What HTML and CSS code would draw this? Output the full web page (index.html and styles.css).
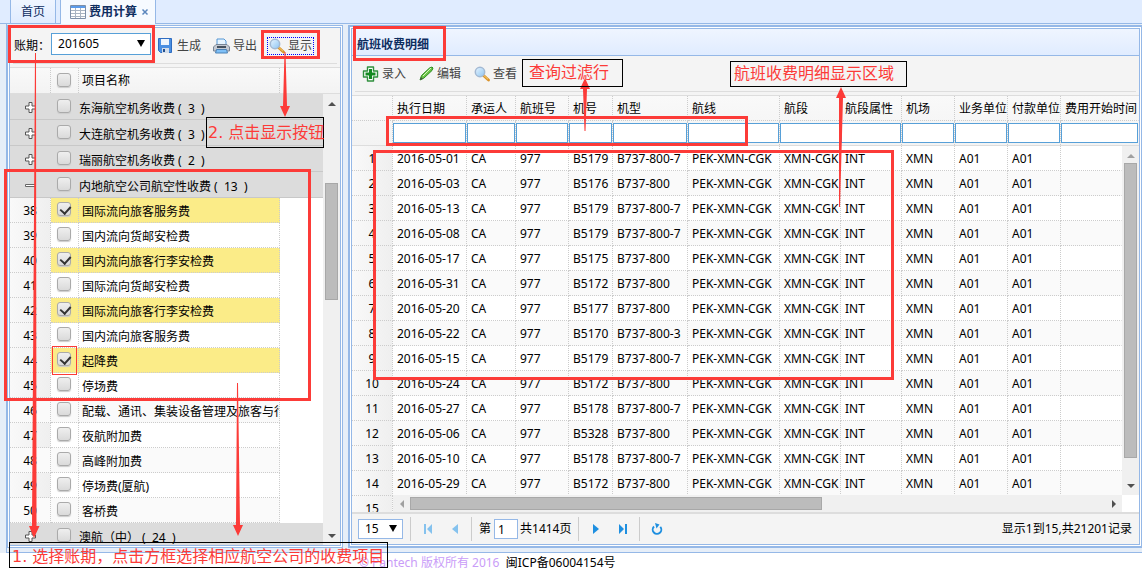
FILE: index.html
```html
<!DOCTYPE html>
<html lang="zh-CN">
<head>
<meta charset="utf-8">
<title>费用计算</title>
<link rel="stylesheet" href="styles.css">
</head>
<body>
<svg class="defs" aria-hidden="true">
  <defs>
    <linearGradient id="lens" x1="0" y1="0" x2="1" y2="1"><stop offset="0" stop-color="#e8f5ff"/><stop offset="1" stop-color="#8cc4f2"/></linearGradient>
    <symbol id="i-find" viewBox="0 0 16 16"><path d="M9.500 9.500l5 4.500" stroke="#d9932c" stroke-width="2.800" stroke-linecap="round"/><path d="M9.500 9.200l4.500 4" stroke="#f6cf6c" stroke-width="1"/><circle cx="6" cy="6" r="4.700" fill="url(#lens)" stroke="#a3b9d3" stroke-width="1.500"/></symbol>
    <symbol id="i-plus" viewBox="0 0 11 11"><path d="M4 .5h3V4h3.500v3H7v3.500H4V7H.5V4H4z" fill="#fff" stroke="#555"/></symbol>
    <symbol id="i-minus" viewBox="0 0 11 11"><path d="M.5 4.500h10v2H.5z" fill="#fff" stroke="#666"/></symbol>
  </defs>
</svg>
<nav class="tabs">
  <button class="tab" type="button">首页</button>
  <button class="tab active" type="button">
    <svg width="16" height="14" viewBox="0 0 16 14"><path d="M.5.5h15v13H.5z" fill="#fff" stroke="#7d8fa8"/><path d="M1 1h14v2H1z" fill="#5b9bea"/><path d="M1 5.500h14M1 8.500h14M1 11.500h14M5.500 3v10M10.500 3v10" stroke="#a9b4c2"/></svg>
    <span>费用计算</span><svg class="close" width="8" height="8" viewBox="0 0 8 8"><path d="M1.500 1.500l5 5M6.500 1.500l-5 5" stroke="#5a86bd" stroke-width="1.500"/></svg>
  </button>
</nav>
<main class="shell">
  <section class="panel side"><div class="inner">
    <div class="toolbar">
      <label for="period">账期：</label>
      <span class="pick period"><select id="period"><option>201605</option></select></span>
      <button type="button" class="tool save"><svg width="14" height="15" viewBox="0 0 14 15"><path d="M.5.5h13v14H2.500l-2-2z" fill="#4a8fe2" stroke="#2f6cc0"/><path d="M3 1h8v6H3z" fill="#eef5fd"/><path d="M4 10h7v5H4z" fill="#d3dde9"/><path d="M5 11h2v3H5z" fill="#244e8c"/></svg>生成</button>
      <button type="button" class="tool print"><svg width="17" height="16" viewBox="0 0 17 16"><path d="M4 7V1h7l2 2v4" fill="#e6f4ff" stroke="#5596d4"/><path d="M3 6.500h11l2.500 2.500v4H.5V9z" fill="#c4cad3" stroke="#788596"/><path d="M4 8h9v2H4z" fill="#46515f"/><path d="M3.500 11.500h10l1 3.500h-12z" fill="#7fc0f7" stroke="#4b81b5"/></svg>导出</button>
      <button type="button" class="tool show"><svg width="16" height="16"><use href="#i-find"/></svg>显示</button>
    </div>
    <table class="grid head tree"><colgroup><col class="w-num"><col class="w-box"><col class="w-name"><col></colgroup>
      <tr><th></th><th><input type="checkbox" id="all"></th><th><label for="all">项目名称</label></th><th class="fill"></th></tr>
    </table>
    <div class="view">
      <div class="rows">
        <table class="grid tree"><colgroup><col class="w-num"><col class="w-box"><col class="w-name"><col></colgroup>
          <tr class="group"><td><svg width="11" height="11"><use href="#i-plus"/></svg></td><td><input type="checkbox" id="g1"></td><td colspan="2"><label for="g1">东海航空机务收费&nbsp;(&nbsp;&nbsp;3&nbsp;&nbsp;)</label></td></tr>
          <tr class="group"><td><svg width="11" height="11"><use href="#i-plus"/></svg></td><td><input type="checkbox" id="g2"></td><td colspan="2"><label for="g2">大连航空机务收费&nbsp;(&nbsp;&nbsp;3&nbsp;&nbsp;)</label></td></tr>
          <tr class="group"><td><svg width="11" height="11"><use href="#i-plus"/></svg></td><td><input type="checkbox" id="g3"></td><td colspan="2"><label for="g3">瑞丽航空机务收费&nbsp;(&nbsp;&nbsp;2&nbsp;&nbsp;)</label></td></tr>
          <tr class="group"><td><svg width="11" height="11"><use href="#i-minus"/></svg></td><td><input type="checkbox" id="g4"></td><td colspan="2"><label for="g4">内地航空公司航空性收费&nbsp;(&nbsp;&nbsp;13&nbsp;&nbsp;)</label></td></tr>
          <tr class="on"><td>38</td><td><input type="checkbox" id="r38" checked></td><td><label for="r38">国际流向旅客服务费</label></td><td class="fill"></td></tr>
          <tr><td>39</td><td><input type="checkbox" id="r39"></td><td><label for="r39">国内流向货邮安检费</label></td><td class="fill"></td></tr>
          <tr class="on"><td>40</td><td><input type="checkbox" id="r40" checked></td><td><label for="r40">国内流向旅客行李安检费</label></td><td class="fill"></td></tr>
          <tr><td>41</td><td><input type="checkbox" id="r41"></td><td><label for="r41">国际流向货邮安检费</label></td><td class="fill"></td></tr>
          <tr class="on"><td>42</td><td><input type="checkbox" id="r42" checked></td><td><label for="r42">国际流向旅客行李安检费</label></td><td class="fill"></td></tr>
          <tr><td>43</td><td><input type="checkbox" id="r43"></td><td><label for="r43">国内流向旅客服务费</label></td><td class="fill"></td></tr>
          <tr class="on"><td>44</td><td><input type="checkbox" id="r44" checked></td><td><label for="r44">起降费</label></td><td class="fill"></td></tr>
          <tr><td>45</td><td><input type="checkbox" id="r45"></td><td><label for="r45">停场费</label></td><td class="fill"></td></tr>
          <tr class="alt"><td>46</td><td><input type="checkbox" id="r46"></td><td><label for="r46">配载、通讯、集装设备管理及旅客与行</label></td><td class="fill"></td></tr>
          <tr><td>47</td><td><input type="checkbox" id="r47"></td><td><label for="r47">夜航附加费</label></td><td class="fill"></td></tr>
          <tr class="alt"><td>48</td><td><input type="checkbox" id="r48"></td><td><label for="r48">高峰附加费</label></td><td class="fill"></td></tr>
          <tr><td>49</td><td><input type="checkbox" id="r49"></td><td><label for="r49">停场费(厦航)</label></td><td class="fill"></td></tr>
          <tr class="alt"><td>50</td><td><input type="checkbox" id="r50"></td><td><label for="r50">客桥费</label></td><td class="fill"></td></tr>
          <tr class="group"><td><svg width="11" height="11"><use href="#i-plus"/></svg></td><td><input type="checkbox" id="g5"></td><td colspan="2"><label for="g5">澳航（中）&nbsp;(&nbsp;&nbsp;24&nbsp;&nbsp;)</label></td></tr>
        </table>
      </div>
      <div class="bar vert tree-bar" aria-hidden="true"><i class="up"></i><b></b><s></s><u></u><i class="down"></i></div>
    </div>
  </div></section>

  <section class="panel detail"><div class="inner">
    <h2>航班收费明细</h2>
    <div class="toolbar">
      <button type="button" class="tool"><svg width="17" height="16" viewBox="0 0 17 16"><path d="M5.500 1h6v4h4v6h-4v4h-6v-4h-4V5h4z" fill="#fff" stroke="#2f8f3d" stroke-width="1.400" stroke-linejoin="round"/><path d="M7 3h3v3.500h3.500v3H10V13H7V9.500H3.500v-3H7z" fill="#138a21"/></svg>录入</button>
      <button type="button" class="tool"><svg width="15" height="15" viewBox="0 0 15 15"><path d="M1 14l1.500-4.500L10.500 2l2.500-1 1 1-1 2.500L5 12z" fill="#6bc447" stroke="#2e8d22"/><path d="M4 10l8-8" stroke="#d5f5bd"/><path d="M1 14l1-3 2 2z" fill="#465443"/></svg>编辑</button>
      <button type="button" class="tool"><svg width="16" height="16"><use href="#i-find"/></svg>查看</button>
    </div>
    <table class="grid head flights"><colgroup><col class="c0"><col class="c1"><col class="c2"><col class="c3"><col class="c4"><col class="c5"><col class="c6"><col class="c7"><col class="c8"><col class="c9"><col class="c9"><col class="c9"><col></colgroup>
      <tr><th></th><th>执行日期</th><th>承运人</th><th>航班号</th><th>机号</th><th>机型</th><th>航线</th><th>航段</th><th>航段属性</th><th>机场</th><th>业务单位</th><th>付款单位</th><th>费用开始时间</th></tr>
      <tr class="filter"><td></td><td><input aria-label="执行日期"></td><td><input aria-label="承运人"></td><td><input aria-label="航班号"></td><td><input aria-label="机号"></td><td><input aria-label="机型"></td><td><input aria-label="航线"></td><td><input aria-label="航段"></td><td><input aria-label="航段属性"></td><td><input aria-label="机场"></td><td><input aria-label="业务单位"></td><td><input aria-label="付款单位"></td><td><input aria-label="费用开始时间"></td></tr>
    </table>
    <div class="view">
      <div class="frozen"><table class="grid nums">
        <tr><td>1</td></tr><tr><td>2</td></tr><tr><td>3</td></tr><tr><td>4</td></tr><tr><td>5</td></tr><tr><td>6</td></tr><tr><td>7</td></tr><tr><td>8</td></tr><tr><td>9</td></tr><tr><td>10</td></tr><tr><td>11</td></tr><tr><td>12</td></tr><tr><td>13</td></tr><tr><td>14</td></tr><tr><td>15</td></tr>
      </table></div>
      <div class="scroll">
        <div class="rows"><table class="grid data"><colgroup><col class="c1"><col class="c2"><col class="c3"><col class="c4"><col class="c5"><col class="c6"><col class="c7"><col class="c8"><col class="c9"><col class="c9"><col class="c9"><col></colgroup>
          <tr><td>2016-05-01</td><td>CA</td><td>977</td><td>B5179</td><td>B737-800-7</td><td>PEK-XMN-CGK</td><td>XMN-CGK</td><td>INT</td><td>XMN</td><td>A01</td><td>A01</td><td></td></tr>
          <tr><td>2016-05-03</td><td>CA</td><td>977</td><td>B5176</td><td>B737-800</td><td>PEK-XMN-CGK</td><td>XMN-CGK</td><td>INT</td><td>XMN</td><td>A01</td><td>A01</td><td></td></tr>
          <tr><td>2016-05-13</td><td>CA</td><td>977</td><td>B5179</td><td>B737-800-7</td><td>PEK-XMN-CGK</td><td>XMN-CGK</td><td>INT</td><td>XMN</td><td>A01</td><td>A01</td><td></td></tr>
          <tr><td>2016-05-08</td><td>CA</td><td>977</td><td>B5179</td><td>B737-800-7</td><td>PEK-XMN-CGK</td><td>XMN-CGK</td><td>INT</td><td>XMN</td><td>A01</td><td>A01</td><td></td></tr>
          <tr><td>2016-05-17</td><td>CA</td><td>977</td><td>B5175</td><td>B737-800</td><td>PEK-XMN-CGK</td><td>XMN-CGK</td><td>INT</td><td>XMN</td><td>A01</td><td>A01</td><td></td></tr>
          <tr><td>2016-05-31</td><td>CA</td><td>977</td><td>B5172</td><td>B737-800</td><td>PEK-XMN-CGK</td><td>XMN-CGK</td><td>INT</td><td>XMN</td><td>A01</td><td>A01</td><td></td></tr>
          <tr><td>2016-05-20</td><td>CA</td><td>977</td><td>B5177</td><td>B737-800</td><td>PEK-XMN-CGK</td><td>XMN-CGK</td><td>INT</td><td>XMN</td><td>A01</td><td>A01</td><td></td></tr>
          <tr><td>2016-05-22</td><td>CA</td><td>977</td><td>B5170</td><td>B737-800-3</td><td>PEK-XMN-CGK</td><td>XMN-CGK</td><td>INT</td><td>XMN</td><td>A01</td><td>A01</td><td></td></tr>
          <tr><td>2016-05-15</td><td>CA</td><td>977</td><td>B5179</td><td>B737-800-7</td><td>PEK-XMN-CGK</td><td>XMN-CGK</td><td>INT</td><td>XMN</td><td>A01</td><td>A01</td><td></td></tr>
          <tr><td>2016-05-24</td><td>CA</td><td>977</td><td>B5172</td><td>B737-800</td><td>PEK-XMN-CGK</td><td>XMN-CGK</td><td>INT</td><td>XMN</td><td>A01</td><td>A01</td><td></td></tr>
          <tr><td>2016-05-27</td><td>CA</td><td>977</td><td>B5178</td><td>B737-800-7</td><td>PEK-XMN-CGK</td><td>XMN-CGK</td><td>INT</td><td>XMN</td><td>A01</td><td>A01</td><td></td></tr>
          <tr><td>2016-05-06</td><td>CA</td><td>977</td><td>B5328</td><td>B737-800</td><td>PEK-XMN-CGK</td><td>XMN-CGK</td><td>INT</td><td>XMN</td><td>A01</td><td>A01</td><td></td></tr>
          <tr><td>2016-05-10</td><td>CA</td><td>977</td><td>B5178</td><td>B737-800-7</td><td>PEK-XMN-CGK</td><td>XMN-CGK</td><td>INT</td><td>XMN</td><td>A01</td><td>A01</td><td></td></tr>
          <tr><td>2016-05-29</td><td>CA</td><td>977</td><td>B5172</td><td>B737-800</td><td>PEK-XMN-CGK</td><td>XMN-CGK</td><td>INT</td><td>XMN</td><td>A01</td><td>A01</td><td></td></tr>
        </table></div>
        <div class="bar horiz" aria-hidden="true"><i class="left"></i><s></s><u></u><i class="right"></i></div>
      </div>
      <div class="edge"><div class="bar vert data-bar" aria-hidden="true"><i class="up"></i><s></s><u></u><i class="down"></i></div></div>
    </div>
    <div class="pager">
      <span class="pick size"><select aria-label="每页条数"><option>15</option></select></span>
      <span class="sep"></span>
      <button type="button" class="dim" aria-label="首页"><svg width="10" height="12" viewBox="0 0 10 12"><path d="M1 1h2v10H1zM9 1v10L4 6z"/></svg></button>
      <button type="button" class="dim" aria-label="上一页"><svg width="10" height="12" viewBox="0 0 10 12"><path d="M8 1v10L2 6z"/></svg></button>
      <span class="sep"></span>
      <label for="page">第</label><input id="page" value="1"><span class="total">共1414页</span>
      <span class="sep"></span>
      <button type="button" aria-label="下一页"><svg width="10" height="12" viewBox="0 0 10 12"><path d="M2 1v10l6-5z"/></svg></button>
      <button type="button" aria-label="末页"><svg width="10" height="12" viewBox="0 0 10 12"><path d="M7 1h2v10H7zM1 1v10l5-5z"/></svg></button>
      <span class="sep"></span>
      <button type="button" aria-label="刷新"><svg width="12" height="13" viewBox="0 0 12 13"><path d="M3 3.500a4.300 4.300 0 1 0 6.300.3" fill="none" stroke="#1e8fe0" stroke-width="1.900"/><path d="M4 0l4.500 1.500L5.500 5.500z"/></svg></button>
      <span class="info">显示1到15,共21201记录</span>
    </div>
  </div></section>
</main>
<footer><span>© Pantech 版权所有 2016</span>&nbsp; 闽ICP备06004154号</footer>

<div class="notes">
  <div class="frame f-period"></div><div class="frame f-show"></div><div class="frame f-items"></div><div class="frame thin f-box"></div>
  <div class="frame f-title"></div><div class="frame f-filter"></div><div class="frame f-data"></div>
  <svg class="arrows" width="900" height="545" viewBox="0 0 900 545" aria-hidden="true">
    <path d="M35 53h1l.5 473h3L34 538l-5-12h3z"/>
    <path d="M284.500 52h1l1.500 54h3l-5 11-5-11h3z"/>
    <path d="M237 383h1l2 142h3l-5 11-5-11h3z"/>
    <path d="M584.500 131h1l1.500-42h3l-5-11-5 11h3z"/>
    <path d="M839 207h1l3-109h3l-5-11-5 11h3z"/>
  </svg>
  <p class="note n-show">2. 点击显示按钮</p>
  <p class="note n-filter">查询过滤行</p>
  <p class="note n-data">航班收费明细显示区域</p>
  <p class="note n-period">1. 选择账期，点击方框选择相应航空公司的收费项目</p>
</div>
</body>
</html>
```
FILE: styles.css
```css
* { box-sizing: border-box; }
body {
  margin: 0; height: 100vh; display: flex; flex-direction: column; position: relative; overflow: hidden;
  font: 12px/16px "Noto Sans", "Noto Sans CJK SC", sans-serif; color: #000; background: #fff;
}
button, input, select { font: inherit; color: inherit; margin: 0; padding: 0; border: 0; background: none; }
svg { flex: none; display: block; }
.defs { position: absolute; width: 0; height: 0; }

.tabs { display: flex; gap: 4px; height: 24px; flex: none; padding-left: 10px; background: #e0ecff; border-bottom: 1px solid #95b8e7; }
.tab { height: 23px; padding: 0 10px; border: solid #95b8e7; border-width: 0 1px; background: linear-gradient(#eff5ff, #e0ecff); color: #0e2d5f; }
.tab.active { display: flex; align-items: center; gap: 3px; height: 24px; padding: 0 6px 0 9px; background: #f6faff; font-weight: bold; }
.close { margin-left: 1px; }

.shell { flex: 1; min-height: 0; display: flex; gap: 5px; margin-left: 6px; padding: 1px 0 4px; border: solid #95b8e7; border-width: 0 0 1px 1px; background: #e6eef8; box-shadow: -6px 0 #e6eef8; }
.panel { display: flex; border: 2px solid #95b8e7; padding: 1px; background: #fff; min-width: 0; }
.side { flex: 0 0 336px; border-width: 1px; }
.detail { flex: 1; border-right-width: 1px; }
.inner { flex: 1; min-width: 0; display: flex; flex-direction: column; border: 1px solid #95b8e7; background: #f4f4f4; }
h2 { margin: 0; height: 27px; padding: 2px 5px 0; font-size: 12px; line-height: 28px; color: #0e2d5f; background: linear-gradient(#eff5ff, #e0ecff); border-bottom: 1px solid #95b8e7; }

.toolbar { display: flex; align-items: center; height: 36px; margin: 0 3px 3px; padding-left: 7px; gap: 13px; flex: none; border-bottom: 1px solid #ddd; color: #444; }
.side .toolbar { padding: 0 0 0 1px; gap: 0; color: #000; }
.tool { display: flex; align-items: center; gap: 3px; color: #444; white-space: nowrap; }
.save { margin-left: 7px; gap: 5px; }
.print { margin-left: 12px; }
.show { margin-left: 11px; padding: 0 1px; gap: 3px; outline: 1px dotted #00f; }
.pick { position: relative; display: block; }
.pick select { appearance: none; width: 100%; height: 100%; padding-left: 6px; border: 1px solid #57a0d8; background: #fff; }
.pick::after { content: ""; position: absolute; right: 6px; top: 7px; border: solid transparent; border-width: 7px 4px 0; border-top-color: #000; }
.period { width: 100px; height: 22px; margin: 0 0 4px 1px; }

.grid { width: 100%; table-layout: fixed; border-spacing: 0; flex: none; }
.grid th, .grid td { height: 25px; padding: 1px 0 0 4px; overflow: hidden; white-space: nowrap; text-align: left; font-weight: normal; border: dotted #ccc; border-width: 0 1px 1px 0; }
.grid tr > .fill { border-color: transparent; }
.head { border: solid #ddd; border-width: 1px 0; background: linear-gradient(#f9f9f9, #f3f3f3); }
.flights th { padding-top: 2px; }
.tree.head th { border-bottom: 0; }
.tree label { display: block; overflow: hidden; }
.w-num { width: 41px; }
.w-box { width: 28px; }
.w-name { width: 201px; }
.tree td:first-child, .nums td { padding: 1px 0 0; text-align: center; background: linear-gradient(to right, #f9f9f9, #efefef); }
.tree th:nth-child(2), .tree td:nth-child(2) { padding: 0 0 2px 6px; }
.tree th:nth-child(3), .tree td:nth-child(3) { padding: 3px 0 0 3px; }
.tree.head th:nth-child(3) { padding-top: 1px; }
.tree .alt td, .data tr:nth-child(even) td { background: #fafafa; }
.tree .alt .fill { background: #fff; }
.tree .on td:nth-child(2), .tree .on td:nth-child(3) { background: #fbec88; }
.tree .group td, .tree .group td:first-child { height: 26px; background: #dcdcdc; border: solid #c8c8c8; border-width: 0 0 1px; }
.tree .group td:nth-child(3) { padding: 4px 0 0; }
.group svg { margin: 0 auto; }
input[type="checkbox"] { appearance: none; display: block; width: 14px; height: 14px; border: 1px solid #aaa; border-radius: 3px; background: linear-gradient(#efefef, #dadada); box-shadow: 0 1px 1px #ccc; }
input[type="checkbox"]:checked::after { content: ""; display: block; width: 5px; height: 8px; margin: 1px 0 0 4px; border: solid #333; border-width: 0 2px 2px 0; transform: rotate(42deg); }

.view { flex: 1; min-height: 0; display: flex; background: #fff; }
.rows { flex: 1; min-width: 0; min-height: 0; overflow: hidden; }
.frozen { flex: 0 0 41px; overflow: hidden; background: #f4f4f4; }
.scroll { flex: 1; min-width: 0; display: flex; flex-direction: column; }
.data td:last-child, .flights tr > :last-child { border-right-color: transparent; }
.c0 { width: 41px; } .c1 { width: 74px; } .c2 { width: 49px; } .c3 { width: 53px; } .c4 { width: 44px; } .c5 { width: 75px; }
.c6 { width: 92px; } .c7, .c8 { width: 61px; } .c9 { width: 53px; }
.flights .filter td { padding: 0; height: 24px; border-bottom: 0; }
.filter input { display: block; width: 100%; height: 20px; border: 1px solid #57a0d8; background: #fff; }

.bar { display: flex; background: #f0f0f0; padding: 2px; }
.vert { flex: 0 0 17px; flex-direction: column; }
.horiz { flex: 0 0 17px; padding: 2px 0; }
.bar i { flex: 0 0 15px; display: flex; align-items: center; justify-content: center; }
.horiz i { flex-basis: 17px; }
.bar i::before { content: ""; border: 4px solid transparent; }
.bar .up::before { border-top: 0; border-bottom-color: #505050; }
.bar .down::before { border-bottom: 0; border-top-color: #505050; }
.bar .left::before { border-left: 0; border-right-color: #a0a0a0; }
.bar .right::before { border-right: 0; border-left-color: #505050; }
.data-bar .up::before { border-bottom-color: #a0a0a0; }
.bar s { background: #bcbcbc; border: 1px solid #a8a8a8; }
.tree-bar b { flex: 72; } .tree-bar s { flex: 116; } .tree-bar u { flex: 229; }
.data-bar s { flex: 293; } .data-bar u { flex: 20; }
.horiz s { flex: 411; } .horiz u { flex: 284; }
.edge { flex: 0 0 17px; display: flex; flex-direction: column; padding-bottom: 17px; background: #fff; }
.edge .bar { flex: 1; }

.pager { display: flex; align-items: center; height: 32px; flex: none; padding: 0 7px 0 6px; border-top: 2px solid #ddd; white-space: nowrap; }
.size { width: 45px; height: 20px; margin-right: 4px; }
.size select, #page { border: 1px solid #95b8e7; }
.size::after { top: 6px; }
.sep { width: 1px; height: 24px; margin: 0 3px; background: #ccc; }
.pager button { width: 27px; height: 24px; display: flex; align-items: center; justify-content: center; fill: #1e8fe0; }
.pager button.dim { fill: #85c2ee; }
.pager label { margin-left: 4px; }
.total { margin-right: 4px; }
#page { width: 24px; height: 20px; margin: 0 2px 0 3px; padding-left: 3px; background: #fff; }
.info { margin-left: auto; }
footer { flex: none; height: 22px; padding-left: 359px; line-height: 20px; white-space: nowrap; }
footer span { color: #c99cf8; }

.notes { position: absolute; inset: 0; pointer-events: none; overflow: hidden; }
.frame { position: absolute; border: 3px solid #fc3b38; }
.thin { border-width: 1px; }
.f-period { left: 8px; top: 25px; width: 147px; height: 38px; }
.f-show { left: 261px; top: 30px; width: 59px; height: 29px; }
.f-items { left: 4px; top: 169px; width: 307px; height: 232px; }
.f-box { left: 52px; top: 346px; width: 25px; height: 29px; }
.f-title { left: 353px; top: 26px; width: 93px; height: 35px; }
.f-filter { left: 386px; top: 116px; width: 362px; height: 30px; }
.f-data { left: 373px; top: 150px; width: 521px; height: 230px; }
.arrows { position: absolute; left: 0; top: 0; fill: #fc3b38; }
.note { position: absolute; margin: 0; padding: 0 2px; border: 1px solid #000; color: #fc3b38; font: 16px/26px "DejaVu Sans", "Noto Sans CJK SC", sans-serif; white-space: nowrap; }
.n-show { left: 206px; top: 117px; width: 118px; height: 31px; line-height: 30px; padding: 0 1px; }
.n-filter { left: 522px; top: 59px; width: 101px; height: 28px; padding-left: 6px; }
.n-data { left: 730px; top: 61px; width: 177px; height: 26px; line-height: 24px; padding-left: 3px; }
.n-period { left: 9px; top: 542px; width: 379px; height: 26px; line-height: 28px; }
```
